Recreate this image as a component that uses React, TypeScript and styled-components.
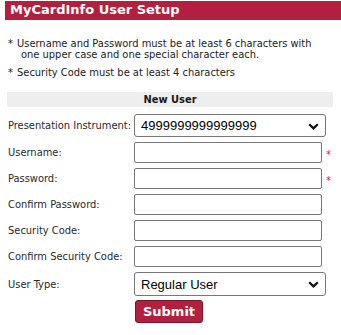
import React from "react";
import styled, { createGlobalStyle } from "styled-components";

const GlobalStyle = createGlobalStyle`
  body {
    margin: 0;
    background: #ffffff;
    font-family: Tahoma, "DejaVu Sans Condensed", "Liberation Sans", sans-serif;
  }
`;

const rows = [
  { label: "Username:", required: true },
  { label: "Password:", required: true, type: "password" },
  { label: "Confirm Password:", required: false, type: "password" },
  { label: "Security Code:", required: false },
  { label: "Confirm Security Code:", required: false },
];

const Chevron = () => (
  <ChevronIcon width="11" height="7" viewBox="0 0 11 7">
    <path d="M1.2 1.2 L5.5 5.4 L9.8 1.2" fill="none" stroke="#111" strokeWidth="2.2" />
  </ChevronIcon>
);

const App: React.FC = () => {
  return (
    <Page>
      <GlobalStyle />
      <Title>MyCardInfo User Setup</Title>
      <Notes>
        <Note>
          <Star>*</Star>
          <NoteText>
            Username and Password must be at least 6 characters with one upper
            case and one special character each.
          </NoteText>
        </Note>
        <Note>
          <Star>*</Star>
          <NoteText>Security Code must be at least 4 characters</NoteText>
        </Note>
      </Notes>
      <Form onSubmit={(e) => e.preventDefault()}>
        <Band>New User</Band>
        <Grid>
          <Label>Presentation Instrument:</Label>
          <SelectWrap>
            <Select defaultValue="4999999999999999">
              <option>4999999999999999</option>
            </Select>
            <Chevron />
          </SelectWrap>
          {rows.map((r) => (
            <React.Fragment key={r.label}>
              <Label>{r.label}</Label>
              <Input type={r.type || "text"} />
              <Marker>{r.required ? "*" : ""}</Marker>
            </React.Fragment>
          ))}
          <Label>User Type:</Label>
          <SelectWrap $tall>
            <Select defaultValue="Regular User">
              <option>Regular User</option>
            </Select>
            <Chevron />
          </SelectWrap>
          <SubmitButton type="submit">Submit</SubmitButton>
        </Grid>
      </Form>
    </Page>
  );
};

export default App;

const Page = styled.div`
  padding: 1px 0 0 5px;
  width: 336px;
`;

const Title = styled.div`
  height: 19px;
  background: #b31f3e;
  color: #ffffff;
  font-family: Verdana, "DejaVu Sans", sans-serif;
  font-weight: bold;
  font-size: 13px;
  line-height: 18px;
  padding-left: 5px;
`;

const Notes = styled.div`
  margin-top: 18px;
  padding-left: 3px;
  display: flex;
  flex-direction: column;
  gap: 7px;
`;

const Note = styled.div`
  display: flex;
  width: 312px;
  font-size: 11px;
  line-height: 11px;
  color: #222;
`;

const Star = styled.span`
  width: 9px;
  flex: none;
`;

const NoteText = styled.span`
  padding-left: 4px;
  text-indent: -4px;
`;

const Form = styled.form`
  margin-top: 14px;
  margin-left: 2px;
  width: 326px;
`;

const Band = styled.div`
  background: #eeeeee;
  height: 15px;
  line-height: 15px;
  text-align: center;
  font-weight: bold;
  font-size: 11px;
  color: #1a1a1a;
`;

const Grid = styled.div`
  display: grid;
  grid-template-columns: 127px 188px 11px;
  row-gap: 5px;
  align-items: center;
  margin-top: 7px;
`;

const Label = styled.label`
  grid-column: 1;
  padding-left: 1px;
  font-size: 11px;
  color: #2a2a2a;
  white-space: nowrap;
`;

const SelectWrap = styled.div<{ $tall?: boolean }>`
  position: relative;
  grid-column: 2 / 4;
  width: 192px;
  height: ${(p) => (p.$tall ? 24 : 23)}px;
`;

const Select = styled.select`
  appearance: none;
  box-sizing: border-box;
  width: 100%;
  height: 100%;
  border: 1px solid #767676;
  border-radius: 3px;
  background: #ffffff;
  padding: 0 0 0 6px;
  font-family: "Liberation Sans", Arial, sans-serif;
  font-size: 13px;
  color: #000;
`;

const ChevronIcon = styled.svg`
  position: absolute;
  right: 7px;
  top: 50%;
  margin-top: -3px;
  pointer-events: none;
`;

const Input = styled.input`
  grid-column: 2;
  box-sizing: border-box;
  width: 188px;
  height: 21px;
  border: 1px solid #767676;
  border-radius: 2px;
  padding: 0 4px;
  background: #fff;
`;

const Marker = styled.span`
  grid-column: 3;
  color: #e0202e;
  font-size: 11px;
  padding-left: 4px;
  margin-top: 3px;
`;

const SubmitButton = styled.button`
  grid-column: 2;
  justify-self: start;
  margin-left: 1px;
  margin-top: -1px;
  width: 68px;
  height: 23px;
  background: #b31f3e;
  border: 1px solid #7d1429;
  border-radius: 3px;
  color: #ffffff;
  font-family: Verdana, "DejaVu Sans", sans-serif;
  font-weight: bold;
  font-size: 13px;
  padding: 0;
  cursor: pointer;
`;
